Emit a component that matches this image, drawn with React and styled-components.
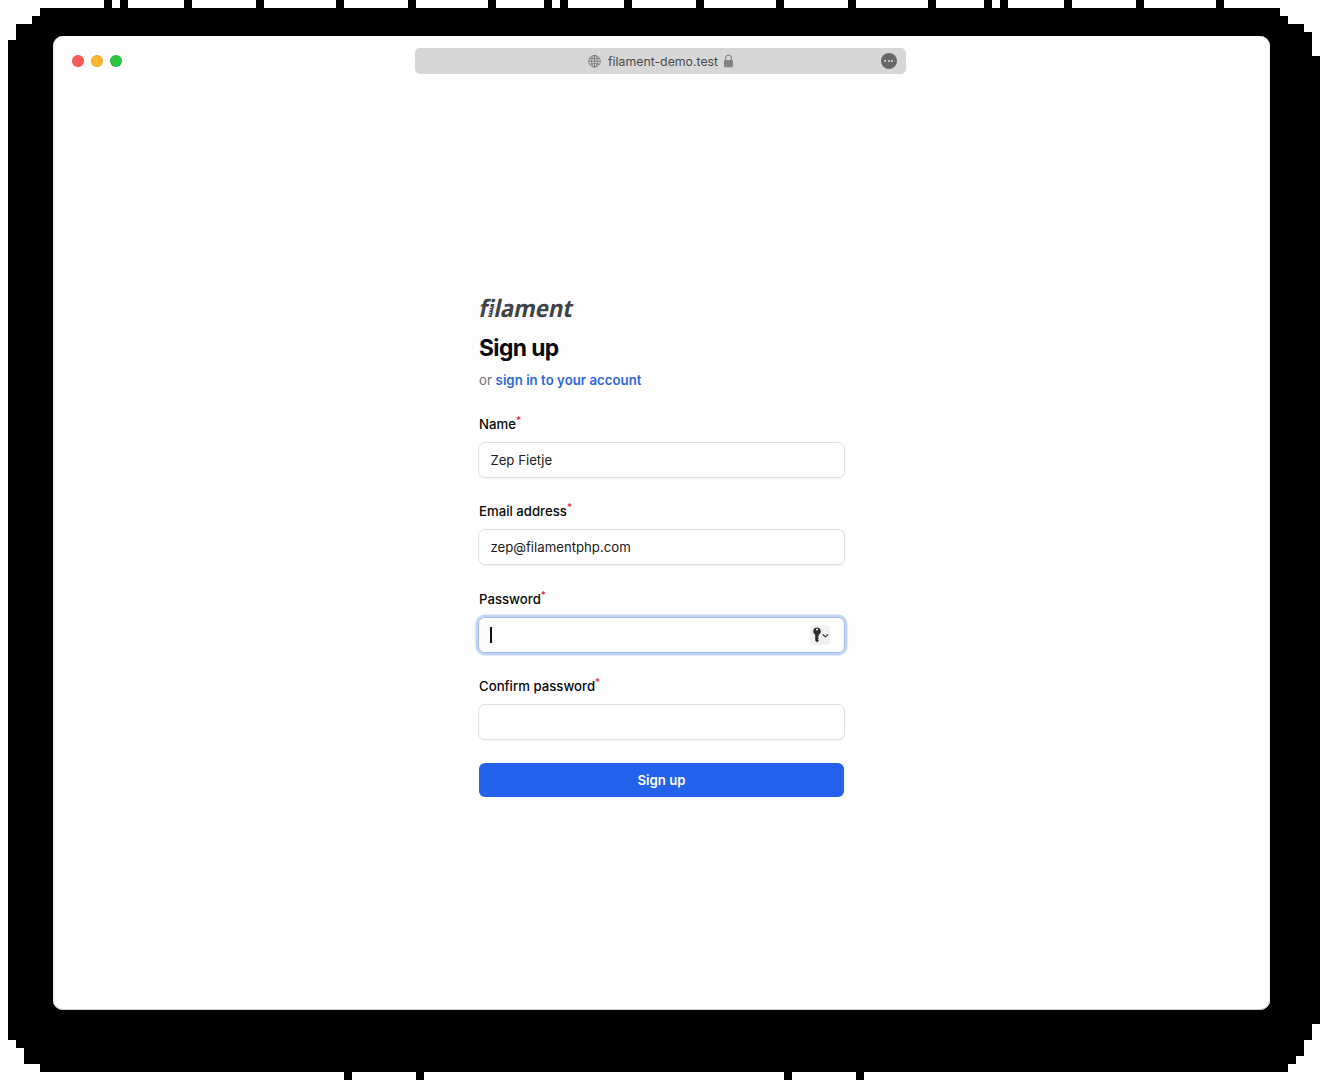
import React from "react";
import styled, { createGlobalStyle } from "styled-components";

const GlobalStyle = createGlobalStyle`
  * { box-sizing: border-box; }
  body { margin: 0; background: #fff; font-family: Inter, "Liberation Sans", sans-serif; }
`;

const topTicks = [104, 120, 184, 256, 336, 408, 488, 544, 560, 624, 696, 776, 848, 928, 984, 1000, 1064, 1136, 1216];
const bottomTicks = [344, 416, 784, 856];

const outline = [
  [8, 40], [16, 40], [16, 24], [32, 24], [32, 16], [40, 16], [40, 8],
  ...topTicks.flatMap((x) => [[x, 8], [x, 0], [x + 8, 0], [x + 8, 8]]),
  [1280, 8], [1280, 16], [1288, 16], [1288, 24], [1304, 24], [1304, 32], [1312, 32], [1312, 56], [1320, 56],
  [1320, 1024], [1312, 1024], [1312, 1040], [1304, 1040], [1304, 1056], [1296, 1056], [1296, 1064], [1288, 1064], [1288, 1072],
  ...[...bottomTicks].reverse().flatMap((x) => [[x + 8, 1072], [x + 8, 1080], [x, 1080], [x, 1072]]),
  [40, 1072], [40, 1064], [24, 1064], [24, 1048], [16, 1048], [16, 1040], [8, 1040],
].map(([x, y]) => `${x}px ${y}px`).join(", ");

const Backdrop = styled.div`
  width: 1323px;
  height: 1080px;
  padding: 36px 53px 70px;
  background: #000;
  clip-path: polygon(${outline});
`;

const Window = styled.div`
  width: 1217px;
  height: 974px;
  border-radius: 10px;
  background: #fefefe;
  box-shadow: inset 0 -1px 0 #c9cbcb, inset 1px 0 0 #eee, inset -1px 0 0 #eee;
`;

const TitleBar = styled.header`
  display: grid;
  grid-template-columns: 362.3px 490.5px 1fr;
  height: 50px;
  align-items: center;
`;

const Lights = styled.div`
  display: flex;
  gap: 7px;
  padding-left: 19px;
`;

const Light = styled.span`
  width: 12px;
  height: 12px;
  border-radius: 50%;
  background: ${(p) => p.$color};
  box-shadow: inset 0 0 0 0.5px rgba(0, 0, 0, 0.15);
`;

const AddressBar = styled.div`
  display: grid;
  grid-template-columns: 1fr auto 1fr;
  align-items: center;
  height: 26px;
  border-radius: 5px;
  background: #d7d7d7;
  padding: 0 9px;
`;

const Address = styled.div`
  grid-column: 2;
  display: flex;
  align-items: center;
  padding-left: 1px;
  color: #4b4b4b;
  font-size: 12.3px;
  line-height: 16px;
  svg { display: block; }
`;

const Host = styled.span`
  width: 110px;
  margin: 1px 5px 0 7px;
  white-space: nowrap;
`;

const MoreButton = styled.span`
  justify-self: end;
  display: flex;
  align-items: center;
  justify-content: center;
  gap: 1.4px;
  width: 16px;
  height: 16px;
  border-radius: 50%;
  background: #676767;
`;

const Dot = styled.i`
  width: 2.2px;
  height: 2.2px;
  border-radius: 50%;
  background: #dedede;
`;

const Panel = styled.main`
  width: 367px;
  margin: 209px 0 0 425px;
`;

const Brand = styled.div`
  position: relative;
  width: max-content;
  height: 28px;
  color: #424347;
  font: 700 24px/26px "Noto Sans", "Open Sans", sans-serif;
  font-variant-ligatures: none;
  white-space: nowrap;
  transform-origin: 0 22px;
  transform: skewX(-12deg) scaleX(0.92);
`;

const Coil = styled.svg`
  position: absolute;
  left: 9px;
  top: 3px;
`;

const Title = styled.h1`
  margin: 9px 0 0;
  padding-left: 1px;
  color: #09090b;
  font-size: 22.8px;
  line-height: 32px;
  font-weight: 700;
  letter-spacing: -0.57px;
`;

const Subtitle = styled.p`
  margin: 6px 0 0;
  padding-left: 1px;
  color: #71717a;
  font-size: 13.2px;
  line-height: 20px;
`;

const SignIn = styled.a`
  color: #2f67df;
  font-weight: 600;
  letter-spacing: 0.04px;
`;

const Form = styled.form`
  display: flex;
  flex-direction: column;
  margin-top: 23px;
`;

const Field = styled.div`
  height: 87.49px;
`;

const Label = styled.label`
  display: flex;
  padding-left: 1px;
  height: 29px;
  color: #09090b;
  font-size: 13.2px;
  line-height: 22px;
  font-weight: 500;
`;

const Star = styled.sup`
  color: #e11d48;
  font-size: 10px;
  line-height: 15px;
  font-weight: 500;
`;

const InputBox = styled.div`
  display: flex;
  align-items: center;
  justify-content: space-between;
  height: 36px;
  padding: 0 14px 0 11.4px;
  border: 1px solid ${(p) => (p.$focused ? "#a3bbe8" : "#dfdfe1")};
  border-radius: 7px;
  color: #202023;
  font-size: 13.2px;
  box-shadow: ${(p) => (p.$focused ? "0 0 0 2.5px #c2d4f5" : "0 1px 1px rgba(0,0,0,.05)")};
`;

const Caret = styled.span`
  width: 2px;
  height: 16px;
  background: #111;
`;

const KeyButton = styled.span`
  display: grid;
  place-items: center;
  width: 20px;
  height: 20px;
  border-radius: 4px;
  background: #f0f0f0;
`;

const Submit = styled.button`
  width: 365px;
  height: 34px;
  margin: 0 0 0 1px;
  padding: 0;
  border: 0;
  border-radius: 6px;
  background: #2362ea;
  color: #fff;
  font: 600 13.2px/20px Inter, sans-serif;
`;

function Globe() {
  return (
    <svg width="13" height="13" viewBox="0 0 13 13" fill="none" stroke="#707070" strokeWidth="0.8">
      <circle cx="6.5" cy="6.2" r="5.8" />
      <ellipse cx="6.5" cy="6.2" rx="2.9" ry="5.8" />
      <path d="M6.5.4v11.6M.7 6.2h11.6M1.7 3.2q4.8 1.4 9.6 0M1.7 9.2q4.8-1.4 9.6 0" />
    </svg>
  );
}

function Lock() {
  return (
    <svg width="11" height="14" viewBox="0 0 11 14">
      <path d="M2.6 7V4.2a2.9 3 0 0 1 5.8 0V7" fill="none" stroke="#868686" strokeWidth="1.1" />
      <rect x="1" y="6" width="9" height="7.2" rx="1.2" fill="#838383" />
    </svg>
  );
}

function Key() {
  return (
    <svg width="20" height="20" viewBox="0 0 20 20">
      <path fillRule="evenodd" fill="#2e2e2e" d="M7 2.4a3.9 3.9 0 0 0-1.8 7.3v5.7l1.8 1.8 2-1.7-1.1-1.2 1.1-1.1-1.1-1.3.9-.8V9.7A3.9 3.9 0 0 0 7 2.4Zm0 1.2a1 1 0 1 1 0 2 1 1 0 0 1 0-2Z" />
      <path d="m13.1 9.7 2.3 2.2 2.3-2.2" fill="none" stroke="#3c3c3c" strokeWidth="1.2" strokeLinecap="round" strokeLinejoin="round" />
    </svg>
  );
}

function FormField({ label, value, focused }) {
  return (
    <Field>
      <Label>{label}<Star>*</Star></Label>
      <InputBox $focused={focused}>
        {focused ? <><Caret /><KeyButton><Key /></KeyButton></> : value}
      </InputBox>
    </Field>
  );
}

export default function App() {
  return (
    <>
      <GlobalStyle />
      <Backdrop>
        <Window>
          <TitleBar>
            <Lights>
              <Light $color="#fb5d56" />
              <Light $color="#fbb82e" />
              <Light $color="#2ac543" />
            </Lights>
            <AddressBar>
              <Address><Globe /><Host>filament-demo.test</Host><Lock /></Address>
              <MoreButton><Dot /><Dot /><Dot /></MoreButton>
            </AddressBar>
          </TitleBar>
          <Panel>
            <Brand>
              filament
              <Coil width="8" height="22" viewBox="0 0 8 22" stroke="#fefefe" strokeWidth="0.9">
                <path d="M0 8.5l4 1M0 11l4 1M0 13.5l4 1M0 16l4 1" />
              </Coil>
            </Brand>
            <Title>Sign up</Title>
            <Subtitle>or <SignIn>sign in to your account</SignIn></Subtitle>
            <Form>
              <FormField label="Name" value="Zep Fietje" />
              <FormField label="Email address" value="zep@filamentphp.com" />
              <FormField label="Password" focused />
              <FormField label="Confirm password" value="" />
              <Submit type="button">Sign up</Submit>
            </Form>
          </Panel>
        </Window>
      </Backdrop>
    </>
  );
}
